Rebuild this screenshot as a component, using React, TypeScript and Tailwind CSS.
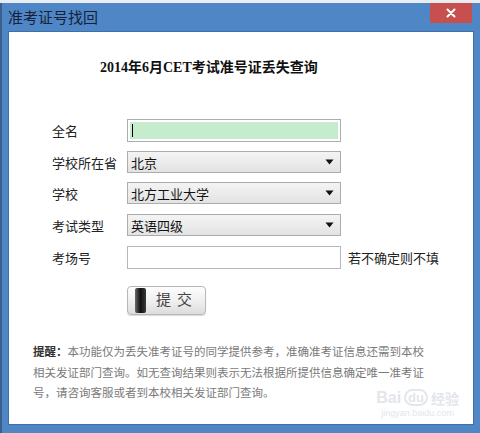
import React from "react";

const cjk = { fontFamily: '"Noto Sans CJK SC", "Liberation Sans", sans-serif' };
const serif = { fontFamily: '"Liberation Serif", "Noto Sans CJK SC", serif' };

function Arrow() {
  return (
    <svg width="9" height="6" viewBox="0 0 9 6" className="shrink-0">
      <path d="M0.5 0.5 H8.5 L4.5 5.5 Z" fill="#111" />
    </svg>
  );
}

function Select({ value }: { value: string }) {
  return (
    <div className="w-[214px] h-[22px] border border-[#acacac] bg-gradient-to-b from-[#f4f4f4] to-[#e3e3e3] flex items-center justify-between pl-[3px] pr-[6px] text-[13px] text-[#111]">
      <span className="leading-none">{value}</span>
      <Arrow />
    </div>
  );
}

function Row({ label, children }: { label: string; children: React.ReactNode }) {
  return (
    <div className="flex items-center h-[22px]">
      <div className="w-[75px] text-[13px] text-[#222] leading-none">{label}</div>
      {children}
    </div>
  );
}

export default function App() {
  return (
    <div className="w-[480px] h-[433px] bg-[#e9ecf0] pt-[3px] overflow-hidden" style={cjk}>
      <div className="h-[430px] bg-[#4f87c6] border-l-2 border-[#3a5f8a] flex flex-col">
        {/* title bar */}
        <div className="h-[28px] flex items-start justify-between pl-[6px] pr-[8px] shrink-0">
          <div className="text-[15px] text-[#15213a] leading-none pt-[6px]">准考证号找回</div>
          <div className="w-[42px] h-[20px] bg-[#c7504f] flex items-center justify-center">
            <svg width="10" height="10" viewBox="0 0 10 10">
              <path d="M1.5 1.5 L8.5 8.5 M8.5 1.5 L1.5 8.5" stroke="#fff" strokeWidth="2" strokeLinecap="round" />
            </svg>
          </div>
        </div>
        {/* content */}
        <div className="ml-[6px] mr-[6px] h-[394px] bg-white border border-[#3f6fa8] relative">
          <div className="pt-[29px] pl-[91px] text-[14px] font-bold text-[#111] leading-none" style={serif}>
            2014年6月CET考试准号证丢失查询
          </div>

          <div className="pl-[43px] pt-[44px] flex flex-col gap-[9px]">
            <div className="flex items-center h-[23px]">
              <div className="w-[75px] text-[13px] text-[#222] leading-none">全名</div>
              <div className="w-[214px] h-[23px] border border-[#abadb3] bg-white p-[2px]">
                <div className="w-full h-full bg-[#c6ecce] flex items-center pl-[2px]">
                  <div className="w-px h-[13px] bg-black" />
                </div>
              </div>
            </div>
            <Row label="学校所在省">
              <Select value="北京" />
            </Row>
            <Row label="学校">
              <Select value="北方工业大学" />
            </Row>
            <div className="flex items-center h-[22px] mt-[1px]">
              <div className="w-[75px] text-[13px] text-[#222] leading-none">考试类型</div>
              <Select value="英语四级" />
            </div>
            <div className="flex items-center h-[23px] mt-[1px]">
              <div className="w-[75px] text-[13px] text-[#222] leading-none">考场号</div>
              <div className="w-[214px] h-[23px] border border-[#b5b8bf] bg-white" />
              <div className="ml-[7px] text-[13px] text-[#222] leading-none">若不确定则不填</div>
            </div>
            <div className="pl-[75px] pt-[8px]">
              <div className="w-[79px] h-[29px] rounded-[4px] border border-[#b8b8b8] bg-gradient-to-b from-[#fdfdfd] via-[#f0f0f0] to-[#dcdcdc] flex items-center shadow-[0_1px_1px_rgba(0,0,0,0.15)]">
                <div className="ml-[7px] w-[11px] h-[25px] rounded-[2px] bg-gradient-to-r from-[#6b6b6b] via-[#111] to-[#3a3a3a]" />
                <div className="ml-[10px] text-[15px] text-[#444] leading-none tracking-[6px]" style={serif}>提交</div>
              </div>
            </div>
          </div>

          <div className="pl-[24px] pt-[26px] text-[11.5px] leading-[20.5px] text-[#7a7a7a]">
            <div className="whitespace-nowrap">
              <span className="font-bold text-[#333]">提醒：</span>本功能仅为丢失准考证号的同学提供参考，准确准考证信息还需到本校
            </div>
            <div className="whitespace-nowrap">相关发证部门查询。如无查询结果则表示无法根据所提供信息确定唯一准考证</div>
            <div className="whitespace-nowrap">号，请咨询客服或者到本校相关发证部门查询。</div>
          </div>

          <div className="absolute right-[14px] bottom-[6px] flex flex-col items-center text-[#e3e6eb] leading-none select-none">
            <div className="flex items-center gap-[3px] text-[16px] font-bold" style={{ fontFamily: '"Liberation Sans", sans-serif' }}>
              <span>Bai</span>
              <span className="rounded-full border-2 border-[#e3e6eb] px-[2px] text-[13px]">du</span>
              <span className="text-[14px]" style={cjk}>经验</span>
            </div>
            <div className="text-[9px] mt-[3px]" style={{ fontFamily: '"Liberation Sans", sans-serif' }}>jingyan.baidu.com</div>
          </div>
        </div>
      </div>
    </div>
  );
}
